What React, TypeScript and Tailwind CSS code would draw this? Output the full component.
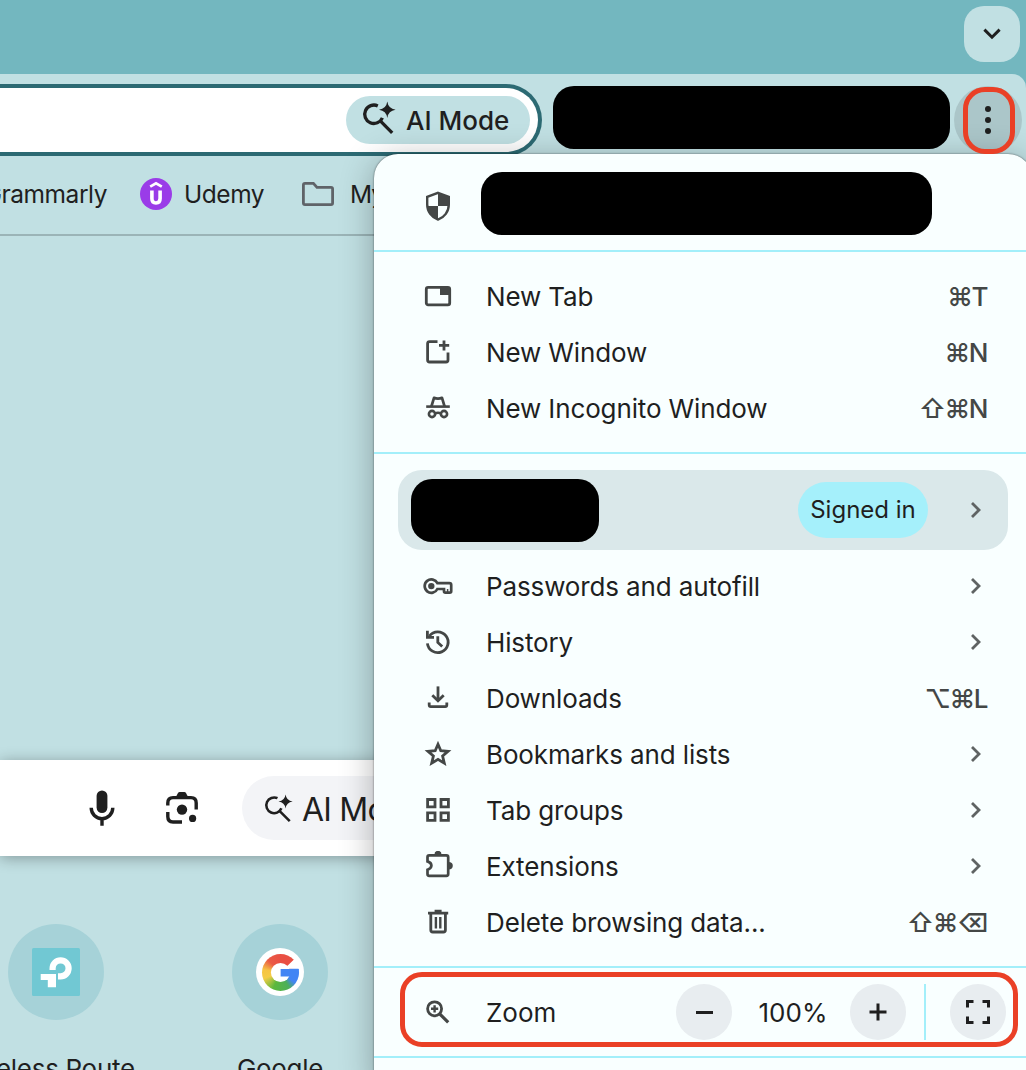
import type { ReactNode } from 'react';
import { clsx } from 'clsx';

type IconProps = { children: ReactNode; className?: string };

// 32px glyph slot used by every menu row
function Glyph({ children, className }: IconProps) {
  return (
    <svg viewBox="0 0 32 32" fill="none" stroke="currentColor" strokeWidth="2.8" className={clsx('h-8 w-8 shrink-0', className)}>
      {children}
    </svg>
  );
}

const shieldIcon = (
  <Glyph>
    <path d="M16 2.8 L26.8 6.8 V14.5 C26.8 21.5 22.4 27.4 16 29.6 C9.6 27.4 5.2 21.5 5.2 14.5 V6.8 Z" strokeWidth="2.4" />
    <path d="M16 2.6 L26.8 6.6 V16 H16 Z M5.2 16 H16 V29.8 C9.6 27.6 5.8 22 5.2 16 Z" fill="currentColor" stroke="none" />
  </Glyph>
);

const newTabIcon = (
  <Glyph>
    <rect x="4.3" y="6.4" width="23.4" height="17.4" rx="1.8" />
    <path d="M18 6 H28 V14 H18 Z" fill="currentColor" stroke="none" />
  </Glyph>
);

const newWindowIcon = (
  <Glyph>
    <path d="M15.5 4.6 H7.6 Q5.6 4.6 5.6 6.6 V23 Q5.6 25 7.6 25 H24 Q26 25 26 23 V15.5" />
    <path d="M22 3.4 V13.4 M17 8.4 H27.2" />
  </Glyph>
);

const incognitoIcon = (
  <Glyph>
    <path d="M4.2 13.6 H27.8" strokeWidth="2.6" />
    <path d="M9.4 13.5 L12 4.8 Q16 6.6 20 4.8 L22.6 13.5" strokeWidth="2.7" strokeLinejoin="round" />
    <circle cx="10" cy="21" r="3.1" strokeWidth="2.6" />
    <circle cx="22" cy="21" r="3.1" strokeWidth="2.6" />
    <path d="M13 20.6 Q16 18.8 19 20.6" strokeWidth="2.4" />
  </Glyph>
);

const keyIcon = (
  <Glyph>
    <path
      d="M15.4 12.2 H27.4 Q29.2 12.2 29.2 13.8 V20.2 Q29.2 21.6 27.8 21.6 H23.4 Q22 21.6 22 20.2 V18 H15.4 A6.7 6.7 0 1 1 15.4 12.2 Z"
      strokeWidth="2.7"
    />
    <circle cx="9.3" cy="15.1" r="3.2" fill="currentColor" stroke="none" />
    <path d="M25.6 18 V21.5" strokeWidth="1.5" />
  </Glyph>
);

const historyIcon = (
  <Glyph>
    <path d="M5.4 16.4 A10.4 10.4 0 1 0 7.4 9" />
    <path d="M5.4 3.8 V10.4 H12" />
    <path d="M15.8 9.2 V15.5 L20.2 19.6" />
  </Glyph>
);

const downloadIcon = (
  <Glyph>
    <path d="M16 3.4 V17.5" />
    <path d="M10.3 12.2 L16 17.8 L21.7 12.2" />
    <path d="M7.2 19.6 V22 Q7.2 23.6 8.8 23.6 H23.2 Q24.8 23.6 24.8 22 V19.6" />
  </Glyph>
);

const starIcon = (
  <Glyph>
    <path d="M16 5.2 L18.8 11.7 L26 12.3 L20.6 17 L22.3 24.2 L16 20.4 L9.7 24.2 L11.4 17 L6 12.3 L13.2 11.7 Z" strokeWidth="2.8" />
  </Glyph>
);

const gridIcon = (
  <Glyph>
    <path d="M5.6 4.5 H13 V11.9 H5.6 Z M19 4.5 H26.4 V11.9 H19 Z M5.6 17.9 H13 V25.3 H5.6 Z M19 17.9 H26.4 V25.3 H19 Z" />
  </Glyph>
);

const extensionIcon = (
  <Glyph>
    <path
      d="M7.2 4.4 H24.4 Q26.2 4.4 26.2 6.2 V23 Q26.2 24.8 24.4 24.8 H7.2 Q5.5 24.8 5.5 23 V18.8 Q9.4 17.6 9.4 14.6 Q9.4 11.6 5.5 10.4 V6.2 Q5.5 4.4 7.2 4.4 Z"
      strokeWidth="2.7"
    />
    <path d="M12.4 4 A3.6 4.2 0 0 1 19.6 4 Z M26.6 11 A4.2 3.7 0 0 1 26.6 18.4 Z" fill="currentColor" stroke="none" />
  </Glyph>
);

const trashIcon = (
  <Glyph>
    <path d="M6 6.2 H26.2 M12.6 4.2 H19.6" />
    <path d="M8.8 6 V23 Q8.8 25 10.8 25 H21.4 Q23.4 25 23.4 23 V6" />
    <path d="M13.9 10 V21.4 M18.3 10 V21.4" strokeWidth="2.4" />
  </Glyph>
);

const zoomIcon = (
  <Glyph>
    <circle cx="12.6" cy="12.8" r="7" />
    <path d="M17.4 17.6 L26.2 26.4" strokeWidth="3.2" />
    <path d="M12.6 9.2 V16.4 M9 12.8 H16.2" strokeWidth="2.4" />
  </Glyph>
);

function ChevronRight() {
  return (
    <svg viewBox="0 0 12 18" fill="none" stroke="#5f6363" strokeWidth="2.8" className="h-[18px] w-3">
      <path d="M2 2 L9 9 L2 16" />
    </svg>
  );
}

function SparkSearch({ className, weight }: { className: string; weight: number }) {
  return (
    <svg viewBox="0 0 34 34" fill="none" stroke="currentColor" strokeWidth={weight} className={className}>
      <path d="M15.8 4.9 A9.2 9.2 0 1 0 20.4 16.8" />
      <path d="M17.8 19.4 L30.2 31.8" />
      <path d="M25.3 0.6 Q26.3 7.8 33.6 8.8 Q26.3 9.8 25.3 17 Q24.3 9.8 17 8.8 Q24.3 7.8 25.3 0.6 Z" fill="currentColor" stroke="none" />
    </svg>
  );
}

type MenuEntry = { icon: ReactNode; label: string; keys?: string };

const windowItems: MenuEntry[] = [
  { icon: newTabIcon, label: 'New Tab', keys: '⌘T' },
  { icon: newWindowIcon, label: 'New Window', keys: '⌘N' },
  { icon: incognitoIcon, label: 'New Incognito Window', keys: '⇧⌘N' },
];

const toolItems: MenuEntry[] = [
  { icon: keyIcon, label: 'Passwords and autofill' },
  { icon: historyIcon, label: 'History' },
  { icon: downloadIcon, label: 'Downloads', keys: '⌥⌘L' },
  { icon: starIcon, label: 'Bookmarks and lists' },
  { icon: gridIcon, label: 'Tab groups' },
  { icon: extensionIcon, label: 'Extensions' },
  { icon: trashIcon, label: 'Delete browsing data...', keys: '⇧⌘⌫' },
];

function MenuRow({ icon, label, keys }: MenuEntry) {
  return (
    <div className="flex h-14 items-center pr-[45px] pl-12 text-[#444746]">
      {icon}
      <span className="ml-8 flex-1 text-[26px] tracking-[-0.13px] text-[#1f1f1f]">{label}</span>
      {keys ? (
        <span className="text-[26px] font-[450] tracking-[-1.5px]">{keys}</span>
      ) : (
        <span className="mr-[5px] -mt-0.5">
          <ChevronRight />
        </span>
      )}
    </div>
  );
}

function AppMenu() {
  return (
    <div className="absolute top-[154px] left-[374px] h-[940px] w-[658px] rounded-3xl bg-[#f9ffff] shadow-[0_0_2px_rgba(0,0,0,0.6),0_6px_34px_rgba(0,0,0,0.3)]">
      <div className="flex h-24 items-start pt-[18px] pl-12 text-[#444746]">
        <div className="mt-[18px]">{shieldIcon}</div>
        <div className="ml-[27px] h-[63px] w-[451px] rounded-[21px] bg-black" />
      </div>

      <div className="border-t-2 border-[#a3effa] pt-[17px] pb-[15px]">
        {windowItems.map((item) => (
          <MenuRow key={item.label} {...item} />
        ))}
      </div>

      <div className="border-t-2 border-[#a3effa] pt-4 pb-[15px]">
        <div className="mx-6 mb-[9px] flex h-20 w-[610px] items-center rounded-3xl bg-[#dae8ea] pl-[13px]">
          <div className="h-[63px] w-[188px] rounded-[21px] bg-black" />
          <div className="ml-auto flex h-14 w-[130px] items-center justify-center rounded-full bg-[#a5f0fb] text-2xl text-[#1f1f1f]">
            Signed in
          </div>
          <div className="ml-[42px] w-[38px]">
            <ChevronRight />
          </div>
        </div>
        {toolItems.map((item) => (
          <MenuRow key={item.label} {...item} />
        ))}
      </div>

      {/* Zoom controls */}
      <div className="flex h-[90px] items-center border-t-2 border-[#a3effa] pl-12 text-[#444746]">
        {zoomIcon}
        <span className="ml-8 w-[190px] pt-0.5 text-[26px] text-[#1f1f1f]">Zoom</span>
        <button className="flex h-14 w-14 items-center justify-center rounded-full bg-[#e8edf0]">
          <span className="h-[3px] w-[17px] bg-[#1f1f1f]" />
        </button>
        <span className="w-[118px] pt-0.5 pl-1 text-center text-[26px] text-[#1f1f1f]">100%</span>
        <button className="flex h-14 w-14 items-center justify-center rounded-full bg-[#e8edf0]">
          <svg viewBox="0 0 18 18" stroke="#1f1f1f" strokeWidth="3" className="h-[18px] w-[18px]">
            <path d="M9 0.5 V17.5 M0.5 9 H17.5" />
          </svg>
        </button>
        <span className="ml-[18px] h-14 w-0.5 bg-[#a3effa]" />
        <button className="ml-6 flex h-14 w-14 items-center justify-center rounded-full bg-[#e8edf0]">
          <svg viewBox="0 0 24 24" fill="none" stroke="#1f1f1f" strokeWidth="3" className="h-6 w-6">
            <path d="M1.5 7.5 V1.5 H7.5 M16.5 1.5 H22.5 V7.5 M22.5 16.5 V22.5 H16.5 M7.5 22.5 H1.5 V16.5" />
          </svg>
        </button>
      </div>
      <div className="border-t-2 border-[#a3effa]" />
    </div>
  );
}

function Toolbar() {
  return (
    <div className="flex h-20 items-start rounded-tr-[14px] bg-[#c1e0e3]">
      <div className="mt-2.5 flex h-[72px] w-[542px] items-center justify-end rounded-r-full border-y-4 border-r-4 border-[#2c6a73] bg-white pr-2">
        <div className="flex h-12 w-[184px] items-center rounded-full bg-[#c1e0e3] pl-4 text-[#1f1f1f]">
          <SparkSearch className="-mt-1 h-[34px] w-[34px]" weight={3.3} />
          <span className="ml-2.5 pt-0.5 text-[26px] font-medium whitespace-nowrap">AI Mode</span>
        </div>
      </div>
      <div className="mt-3 ml-[11px] h-[63px] w-[397px] rounded-[21px] bg-black" />
      <div className="mt-3 ml-1 flex h-[68px] w-[68px] flex-col items-center justify-center gap-[5px] rounded-full bg-[#abc6c9]">
        <span className="h-1.5 w-1.5 rounded-full bg-[#1f1f1f]" />
        <span className="h-1.5 w-1.5 rounded-full bg-[#1f1f1f]" />
        <span className="h-1.5 w-1.5 rounded-full bg-[#1f1f1f]" />
      </div>
    </div>
  );
}

function BookmarksBar() {
  return (
    <div className="flex h-[82px] items-center border-b-2 border-[#9bb4b7] text-[24.5px] tracking-[-0.45px] whitespace-nowrap text-[#1f1f1f]">
      <div className="flex w-[107px] shrink-0 justify-end">Grammarly</div>
      <svg viewBox="0 0 32 32" className="ml-[33px] h-8 w-8 shrink-0">
        <circle cx="16" cy="16" r="16" fill="#9a3ce8" />
        <path d="M10.2 8.6 L16 5.3 L21.8 8.6" fill="none" stroke="#fff" strokeWidth="2.8" />
        <path d="M11.9 12.5 V20.6 Q11.9 25 16 25 Q20.1 25 20.1 20.6 V12.5" fill="none" stroke="#fff" strokeWidth="3.6" />
      </svg>
      <span className="ml-3">Udemy</span>
      <svg viewBox="0 0 32 24" fill="none" stroke="#5f6368" strokeWidth="2.8" className="ml-auto h-6 w-8 shrink-0">
        <path d="M1.4 3 Q1.4 1.4 3 1.4 H11.4 L15 5.4 H29 Q30.6 5.4 30.6 7 V21 Q30.6 22.6 29 22.6 H3 Q1.4 22.6 1.4 21 Z" />
      </svg>
      <span className="mr-[643px] ml-4 w-[33px] tracking-[-1px]">My Drive</span>
    </div>
  );
}

function TpLink() {
  return (
    <svg viewBox="0 0 48 48" className="h-12 w-12">
      <rect width="48" height="48" rx="1.5" fill="#71c8d3" />
      <path d="M20.6 22 V20.3 A8 8 0 1 1 28.6 28.3 H26" fill="none" stroke="#fff" strokeWidth="6.2" />
      <path d="M8.7 26 H24 V39.2 H15.8 V32 H8.7 Z" fill="#fff" />
    </svg>
  );
}

function GoogleMark() {
  return (
    <div className="flex h-12 w-12 items-center justify-center rounded-full bg-white">
      <div className="relative h-[37px] w-[37px] rounded-full bg-[conic-gradient(#e94f43_0deg,#e94f43_60deg,#4285f4_75deg,#4285f4_125deg,#4caf5a_150deg,#5cb83c_205deg,#f4cc46_250deg,#f6c443_280deg,#ea5a44_315deg,#e94f43_360deg)]">
        <svg viewBox="0 0 37 37" className="absolute inset-0 h-[37px] w-[37px]">
          <circle cx="18.5" cy="18.5" r="9.6" fill="#fff" />
          <path d="M18.5 18.5 L33 4.5 L38 6 V14.8 H18.5 Z" fill="#fff" />
          <path d="M18.6 14.9 H36.6 Q37 19 36 22.6 H18.6 Z" fill="#4285f4" />
        </svg>
      </div>
    </div>
  );
}

const shortcuts = [
  { label: 'Wireless Route...', logo: <TpLink /> },
  { label: 'Google', logo: <GoogleMark /> },
];

function NewTabPage() {
  return (
    <div className="pt-[524px]">
      <div className="flex h-24 items-center bg-white pl-[86px] text-[#1f1f1f] shadow-[0_2px_14px_rgba(0,0,0,0.32)]">
        <svg viewBox="0 0 32 36" className="h-9 w-8 shrink-0" fill="none" stroke="currentColor">
          <rect x="10.6" y="0.4" width="10.8" height="22.6" rx="5.4" fill="currentColor" stroke="none" />
          <path d="M5.2 17.8 A10.8 10.8 0 0 0 26.8 17.8 M16 28.4 V35.8" strokeWidth="3.4" />
        </svg>
        <svg viewBox="0 0 32 32" className="ml-12 h-8 w-8 shrink-0" fill="none" stroke="currentColor" strokeWidth="3.4">
          <path d="M1.8 13.6 V11 Q1.8 5.6 7 5.6 H25 Q30.2 5.6 30.2 11 V17.6" />
          <path d="M1.8 20 V24.6 Q1.8 30 7 30 H16" />
          <path d="M9.6 5.6 L12 1 Q12.6 0 13.6 0 H18.4 Q19.4 0 20 1 L22.4 5.6 Z" fill="currentColor" stroke="none" />
          <circle cx="16" cy="17.6" r="5.2" fill="currentColor" stroke="none" />
          <circle cx="26.6" cy="26.4" r="3.6" fill="currentColor" stroke="none" />
        </svg>
        <div className="ml-11 flex h-16 w-[220px] shrink-0 items-center rounded-full bg-[#f3f4f7] pl-[22px]">
          <SparkSearch className="h-[29px] w-[29px]" weight={3} />
          <span className="ml-[9px] pt-1 text-[32px] tracking-[-0.8px] whitespace-nowrap">AI Mode</span>
        </div>
      </div>

      <div className="mt-[68px] -ml-[42px] flex gap-7 text-[26px] tracking-[-0.3px] text-[#1f1f1f]">
        {shortcuts.map((item) => (
          <div key={item.label} className="flex w-[196px] flex-col items-center">
            <div className="flex h-24 w-24 items-center justify-center rounded-full bg-[#a6d2d8]">{item.logo}</div>
            <span className="mt-[29px] whitespace-nowrap">{item.label}</span>
          </div>
        ))}
      </div>
    </div>
  );
}

export default function App() {
  return (
    <div className="relative h-[1070px] w-[1026px] overflow-hidden bg-[#c1e0e3] font-['Inter',sans-serif] leading-10">
      {/* Tab strip */}
      <div className="bg-[#73b7bf]">
        <div className="flex h-[74px] justify-end pt-1.5 pr-1.5">
          <button className="flex h-14 w-14 items-center justify-center rounded-[20px] bg-[#c1e0e3]">
            <svg viewBox="0 0 18 12" fill="none" stroke="#1f1f1f" strokeWidth="3" className="h-3 w-[18px]">
              <path d="M1.4 1.6 L9 9.2 L16.6 1.6" />
            </svg>
          </button>
        </div>
        <Toolbar />
      </div>
      <BookmarksBar />
      <NewTabPage />
      <AppMenu />

      {/* Highlight frames */}
      <div className="absolute top-[87px] left-[963px] h-[67px] w-[52px] rounded-[22px] border-[5px] border-[#ea4026]" />
      <div className="absolute top-[972px] left-[400px] h-[75px] w-[618px] rounded-[22px] border-[5px] border-[#ea4026]" />
    </div>
  );
}
